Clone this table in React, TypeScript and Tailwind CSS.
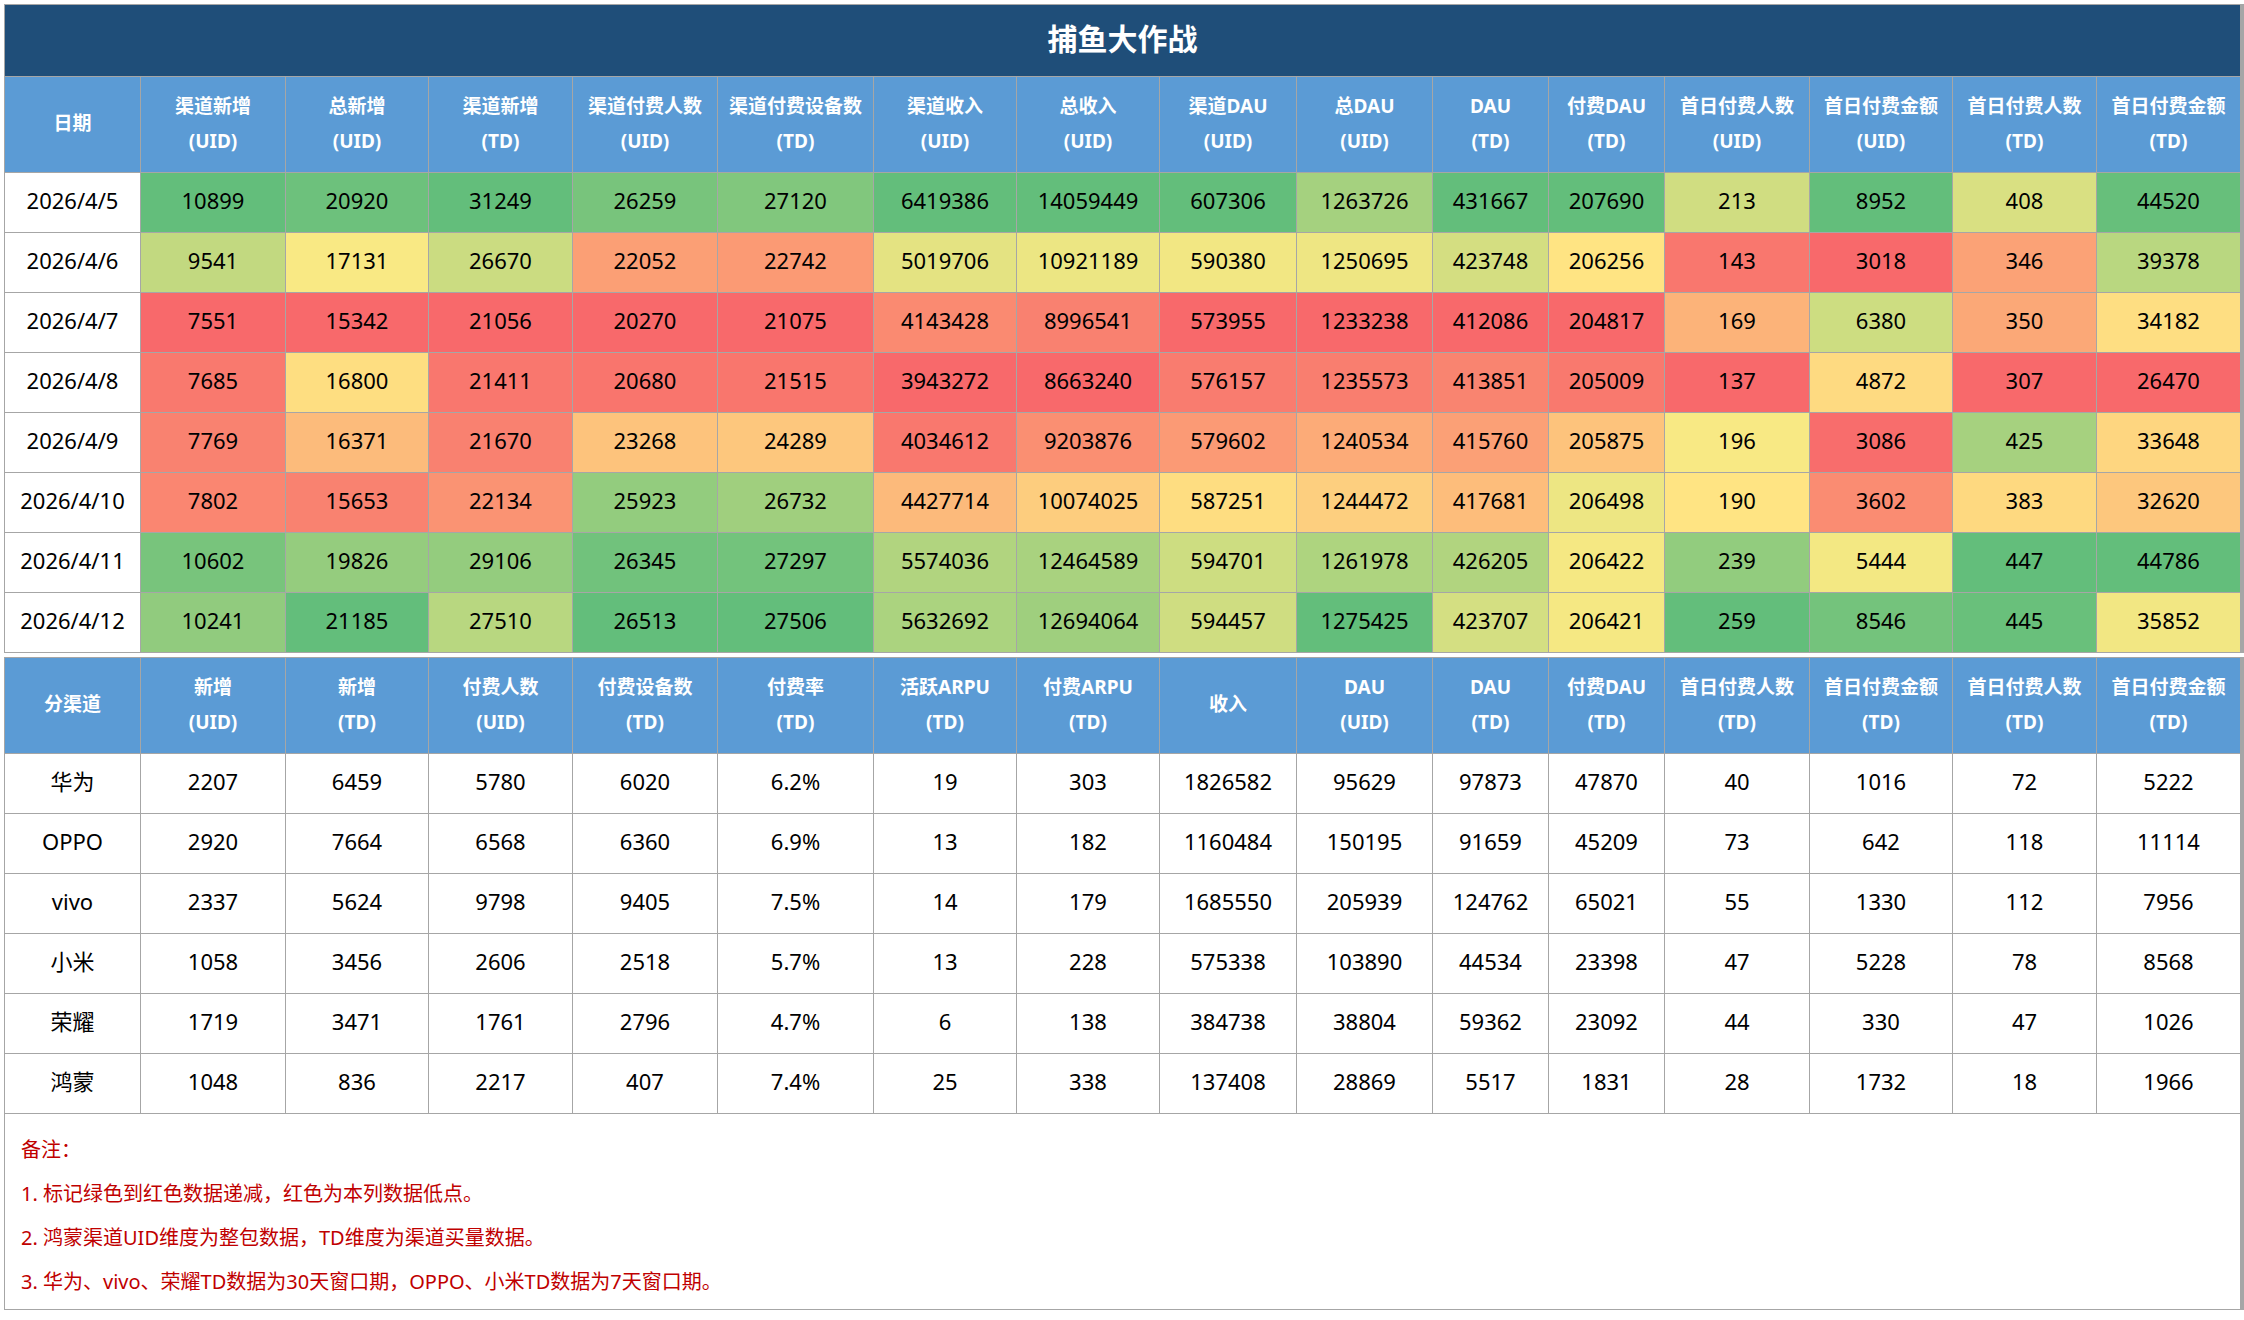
import React from "react";

type Row = { label: string; values: (number | string)[] };

const gridCols =
  "grid grid-cols-[135px_144px_142px_143px_144px_155px_142px_142px_136px_135px_115px_115px_144px_142px_143px_143px] gap-px bg-[#a6a6a6] p-px";

const dailyHeaders: [string, string?][] = [
  ["日期"],
  ["渠道新增", "(UID)"],
  ["总新增", "(UID)"],
  ["渠道新增", "(TD)"],
  ["渠道付费人数", "(UID)"],
  ["渠道付费设备数", "(TD)"],
  ["渠道收入", "(UID)"],
  ["总收入", "(UID)"],
  ["渠道DAU", "(UID)"],
  ["总DAU", "(UID)"],
  ["DAU", "(TD)"],
  ["付费DAU", "(TD)"],
  ["首日付费人数", "(UID)"],
  ["首日付费金额", "(UID)"],
  ["首日付费人数", "(TD)"],
  ["首日付费金额", "(TD)"],
];

const dailyRows: Row[] = [
  { label: "2026/4/5", values: [10899, 20920, 31249, 26259, 27120, 6419386, 14059449, 607306, 1263726, 431667, 207690, 213, 8952, 408, 44520] },
  { label: "2026/4/6", values: [9541, 17131, 26670, 22052, 22742, 5019706, 10921189, 590380, 1250695, 423748, 206256, 143, 3018, 346, 39378] },
  { label: "2026/4/7", values: [7551, 15342, 21056, 20270, 21075, 4143428, 8996541, 573955, 1233238, 412086, 204817, 169, 6380, 350, 34182] },
  { label: "2026/4/8", values: [7685, 16800, 21411, 20680, 21515, 3943272, 8663240, 576157, 1235573, 413851, 205009, 137, 4872, 307, 26470] },
  { label: "2026/4/9", values: [7769, 16371, 21670, 23268, 24289, 4034612, 9203876, 579602, 1240534, 415760, 205875, 196, 3086, 425, 33648] },
  { label: "2026/4/10", values: [7802, 15653, 22134, 25923, 26732, 4427714, 10074025, 587251, 1244472, 417681, 206498, 190, 3602, 383, 32620] },
  { label: "2026/4/11", values: [10602, 19826, 29106, 26345, 27297, 5574036, 12464589, 594701, 1261978, 426205, 206422, 239, 5444, 447, 44786] },
  { label: "2026/4/12", values: [10241, 21185, 27510, 26513, 27506, 5632692, 12694064, 594457, 1275425, 423707, 206421, 259, 8546, 445, 35852] },
];

const channelHeaders: [string, string?][] = [
  ["分渠道"],
  ["新增", "(UID)"],
  ["新增", "(TD)"],
  ["付费人数", "(UID)"],
  ["付费设备数", "(TD)"],
  ["付费率", "(TD)"],
  ["活跃ARPU", "(TD)"],
  ["付费ARPU", "(TD)"],
  ["收入"],
  ["DAU", "(UID)"],
  ["DAU", "(TD)"],
  ["付费DAU", "(TD)"],
  ["首日付费人数", "(TD)"],
  ["首日付费金额", "(TD)"],
  ["首日付费人数", "(TD)"],
  ["首日付费金额", "(TD)"],
];

const channelRows: Row[] = [
  { label: "华为", values: [2207, 6459, 5780, 6020, "6.2%", 19, 303, 1826582, 95629, 97873, 47870, 40, 1016, 72, 5222] },
  { label: "OPPO", values: [2920, 7664, 6568, 6360, "6.9%", 13, 182, 1160484, 150195, 91659, 45209, 73, 642, 118, 11114] },
  { label: "vivo", values: [2337, 5624, 9798, 9405, "7.5%", 14, 179, 1685550, 205939, 124762, 65021, 55, 1330, 112, 7956] },
  { label: "小米", values: [1058, 3456, 2606, 2518, "5.7%", 13, 228, 575338, 103890, 44534, 23398, 47, 5228, 78, 8568] },
  { label: "荣耀", values: [1719, 3471, 1761, 2796, "4.7%", 6, 138, 384738, 38804, 59362, 23092, 44, 330, 47, 1026] },
  { label: "鸿蒙", values: [1048, 836, 2217, 407, "7.4%", 25, 338, 137408, 28869, 5517, 1831, 28, 1732, 18, 1966] },
];

const notes = [
  "备注：",
  "1. 标记绿色到红色数据递减，红色为本列数据低点。",
  "2. 鸿蒙渠道UID维度为整包数据，TD维度为渠道买量数据。",
  "3. 华为、vivo、荣耀TD数据为30天窗口期，OPPO、小米TD数据为7天窗口期。",
];

// excel style 3-colour scale: min red, 50th percentile yellow, max green
const RED = [248, 105, 107];
const YELLOW = [255, 235, 132];
const GREEN = [99, 190, 123];

const mix = (a: number[], b: number[], t: number) =>
  `rgb(${a.map((c, i) => Math.round(c + (b[i] - c) * t)).join(",")})`;

const scaleColor = (v: number, col: number[]) => {
  const sorted = [...col].sort((a, b) => a - b);
  const min = sorted[0];
  const max = sorted[sorted.length - 1];
  const rank = 0.5 * (sorted.length - 1);
  const lo = Math.floor(rank);
  const mid = sorted[lo] + (sorted[Math.ceil(rank)] - sorted[lo]) * (rank - lo);
  if (v <= mid) return mix(RED, YELLOW, mid === min ? 1 : (v - min) / (mid - min));
  return mix(YELLOW, GREEN, max === mid ? 1 : (v - mid) / (max - mid));
};

const HeaderCell = ({ lines }: { lines: [string, string?] }) => (
  <div className="flex h-[95px] flex-col items-center justify-center bg-[#5b9bd5] pb-[2px] text-[19px] font-bold leading-[35px] text-white">
    <span className="whitespace-nowrap">{lines[0]}</span>
    {lines[1] && <span>{lines[1]}</span>}
  </div>
);

const Cell = ({ children, color }: { children: React.ReactNode; color?: string }) => (
  <div
    className="flex h-[59px] items-center justify-center bg-white pb-[5px] text-[22px] text-black"
    style={color ? { backgroundColor: color } : undefined}
  >
    {children}
  </div>
);

export default function App() {
  const columns = dailyHeaders.slice(1).map((_, i) => dailyRows.map((r) => r.values[i] as number));

  return (
    <div className="min-h-[1320px] w-[2244px] bg-white pl-1 pt-1 font-['Noto_Sans','Noto_Sans_CJK_SC',sans-serif]">
      <div className={gridCols}>
        <div className="col-span-16 flex h-[71px] items-center justify-center bg-[#1f4e79] pb-1 text-[30px] font-bold text-white">
          捕鱼大作战
        </div>
        {dailyHeaders.map((h, i) => (
          <HeaderCell key={i} lines={h} />
        ))}
        {dailyRows.map((row) => (
          <React.Fragment key={row.label}>
            <Cell>{row.label}</Cell>
            {row.values.map((v, i) => (
              <Cell key={i} color={scaleColor(v as number, columns[i])}>
                {v}
              </Cell>
            ))}
          </React.Fragment>
        ))}
      </div>

      <div className={`mt-1 ${gridCols}`}>
        {channelHeaders.map((h, i) => (
          <HeaderCell key={i} lines={h} />
        ))}
        {channelRows.map((row) => (
          <React.Fragment key={row.label}>
            <Cell>{row.label}</Cell>
            {row.values.map((v, i) => (
              <Cell key={i}>{v}</Cell>
            ))}
          </React.Fragment>
        ))}
        <div className="col-span-16 h-[195px] bg-white pl-4 pt-[14px] text-[20px] leading-[44px] text-[#c00000]">
          {notes.map((n) => (
            <div key={n}>{n}</div>
          ))}
        </div>
      </div>
    </div>
  );
}
